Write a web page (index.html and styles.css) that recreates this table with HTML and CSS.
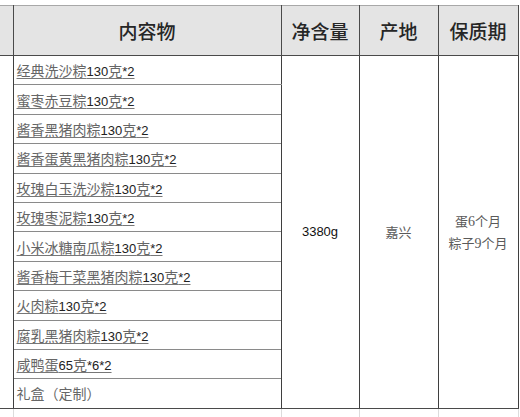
FILE: index.html
```html
<!DOCTYPE html>
<html lang="zh-CN">
<head>
<meta charset="utf-8">
<title>礼盒内容</title>
<link rel="stylesheet" href="styles.css">
</head>
<body>
<table class="spec">
  <colgroup>
    <col class="c-stub">
    <col class="c-items">
    <col class="c-weight">
    <col class="c-origin">
    <col class="c-life">
  </colgroup>
  <thead>
    <tr class="head">
      <th class="stub"></th>
      <th>内容物</th>
      <th>净含量</th>
      <th>产地</th>
      <th>保质期</th>
    </tr>
  </thead>
  <tbody>
    <tr>
      <td class="stub" rowspan="12"></td>
      <td class="item"><a>经典洗沙粽<span class="n">130</span>克<span class="n">*2</span></a></td>
      <td class="merged weight" rowspan="12">3380g</td>
      <td class="merged cn" rowspan="12">嘉兴</td>
      <td class="merged cn" rowspan="12">蛋<span class="d">6</span>个月<br>粽子<span class="d">9</span>个月</td>
    </tr>
    <tr><td class="item"><a>蜜枣赤豆粽<span class="n">130</span>克<span class="n">*2</span></a></td></tr>
    <tr><td class="item"><a>酱香黑猪肉粽<span class="n">130</span>克<span class="n">*2</span></a></td></tr>
    <tr><td class="item"><a>酱香蛋黄黑猪肉粽<span class="n">130</span>克<span class="n">*2</span></a></td></tr>
    <tr><td class="item"><a>玫瑰白玉洗沙粽<span class="n">130</span>克<span class="n">*2</span></a></td></tr>
    <tr><td class="item"><a>玫瑰枣泥粽<span class="n">130</span>克<span class="n">*2</span></a></td></tr>
    <tr><td class="item"><a>小米冰糖南瓜粽<span class="n">130</span>克<span class="n">*2</span></a></td></tr>
    <tr><td class="item"><a>酱香梅干菜黑猪肉粽<span class="n">130</span>克<span class="n">*2</span></a></td></tr>
    <tr><td class="item"><a>火肉粽<span class="n">130</span>克<span class="n">*2</span></a></td></tr>
    <tr><td class="item"><a>腐乳黑猪肉粽<span class="n">130</span>克<span class="n">*2</span></a></td></tr>
    <tr><td class="item"><a>咸鸭蛋<span class="n">65</span>克<span class="n">*6*2</span></a></td></tr>
    <tr><td class="item plain">礼盒（定制）</td></tr>
    <tr class="next">
      <td class="stub"></td><td></td><td></td><td></td><td></td>
    </tr>
  </tbody>
</table>
</body>
</html>
```

FILE: styles.css
```css
html, body {
  margin: 0;
  padding: 0;
  background: #ffffff;
  overflow: hidden;
}

body {
  width: 520px;
  height: 417px;
  font-family: "Liberation Sans", "Noto Sans CJK SC", sans-serif;
}

.spec {
  border-collapse: collapse;
  table-layout: fixed;
  width: 518px;
  margin-top: 5px;
}

.c-stub { width: 13px; }
.c-items { width: 268px; }
.c-weight { width: 78px; }
.c-origin { width: 79px; }
.c-life { width: 80px; }

.head th {
  height: 49px;
  padding: 0;
  background: #e4e4e4;
  border-top: 1px solid #a8a8a8;
  border-bottom: 1px solid #4a4a4a;
  border-left: 1px solid #4a4a4a;
  border-right: 1px solid #4a4a4a;
  font-family: "Noto Sans CJK SC", sans-serif;
  font-size: 19px;
  font-weight: 500;
  color: #262626;
  text-align: center;
  vertical-align: middle;
}

.head th.stub {
  border-left: none;
}

td {
  padding: 0;
  border-left: 1px solid #3f3f3f;
  border-right: 1px solid #3f3f3f;
}

td.stub {
  border-left: none;
  border-bottom: 1px solid #4a4a4a;
}

td.item {
  height: 28.4px;
  padding: 0 0 0 3px;
  border-top: 1px solid #8a8a8a;
  border-bottom: 1px solid #8a8a8a;
  font-size: 14px;
  color: #666666;
  vertical-align: middle;
  white-space: nowrap;
  font-family: "Noto Sans CJK SC", sans-serif;
}

td.item a {
  color: #666666;
  text-decoration: underline;
  text-decoration-color: #777777;
  text-underline-offset: 2px;
}

td.item .n {
  font-family: "Liberation Sans", sans-serif;
  font-size: 13px;
  color: #222222;
}

td.plain {
  border-bottom: 1px solid #4a4a4a;
  color: #666666;
}

td.merged {
  border-bottom: 1px solid #4a4a4a;
  text-align: center;
  vertical-align: middle;
}

td.weight {
  font-family: "Liberation Sans", sans-serif;
  font-size: 13px;
  color: #111111;
}

td.cn {
  font-family: "Noto Sans CJK SC", sans-serif;
  font-size: 13px;
  line-height: 21px;
  color: #5a5a5a;
}

td.cn .d {
  font-family: "Liberation Serif", serif;
  font-size: 14px;
}

tr.next td {
  height: 10px;
  border-left: 1px solid #dcdcdc;
  border-right: 1px solid #dcdcdc;
  border-top: 1px solid #4a4a4a;
}

tr.next td.stub {
  border-left: none;
  border-bottom: none;
}
```
